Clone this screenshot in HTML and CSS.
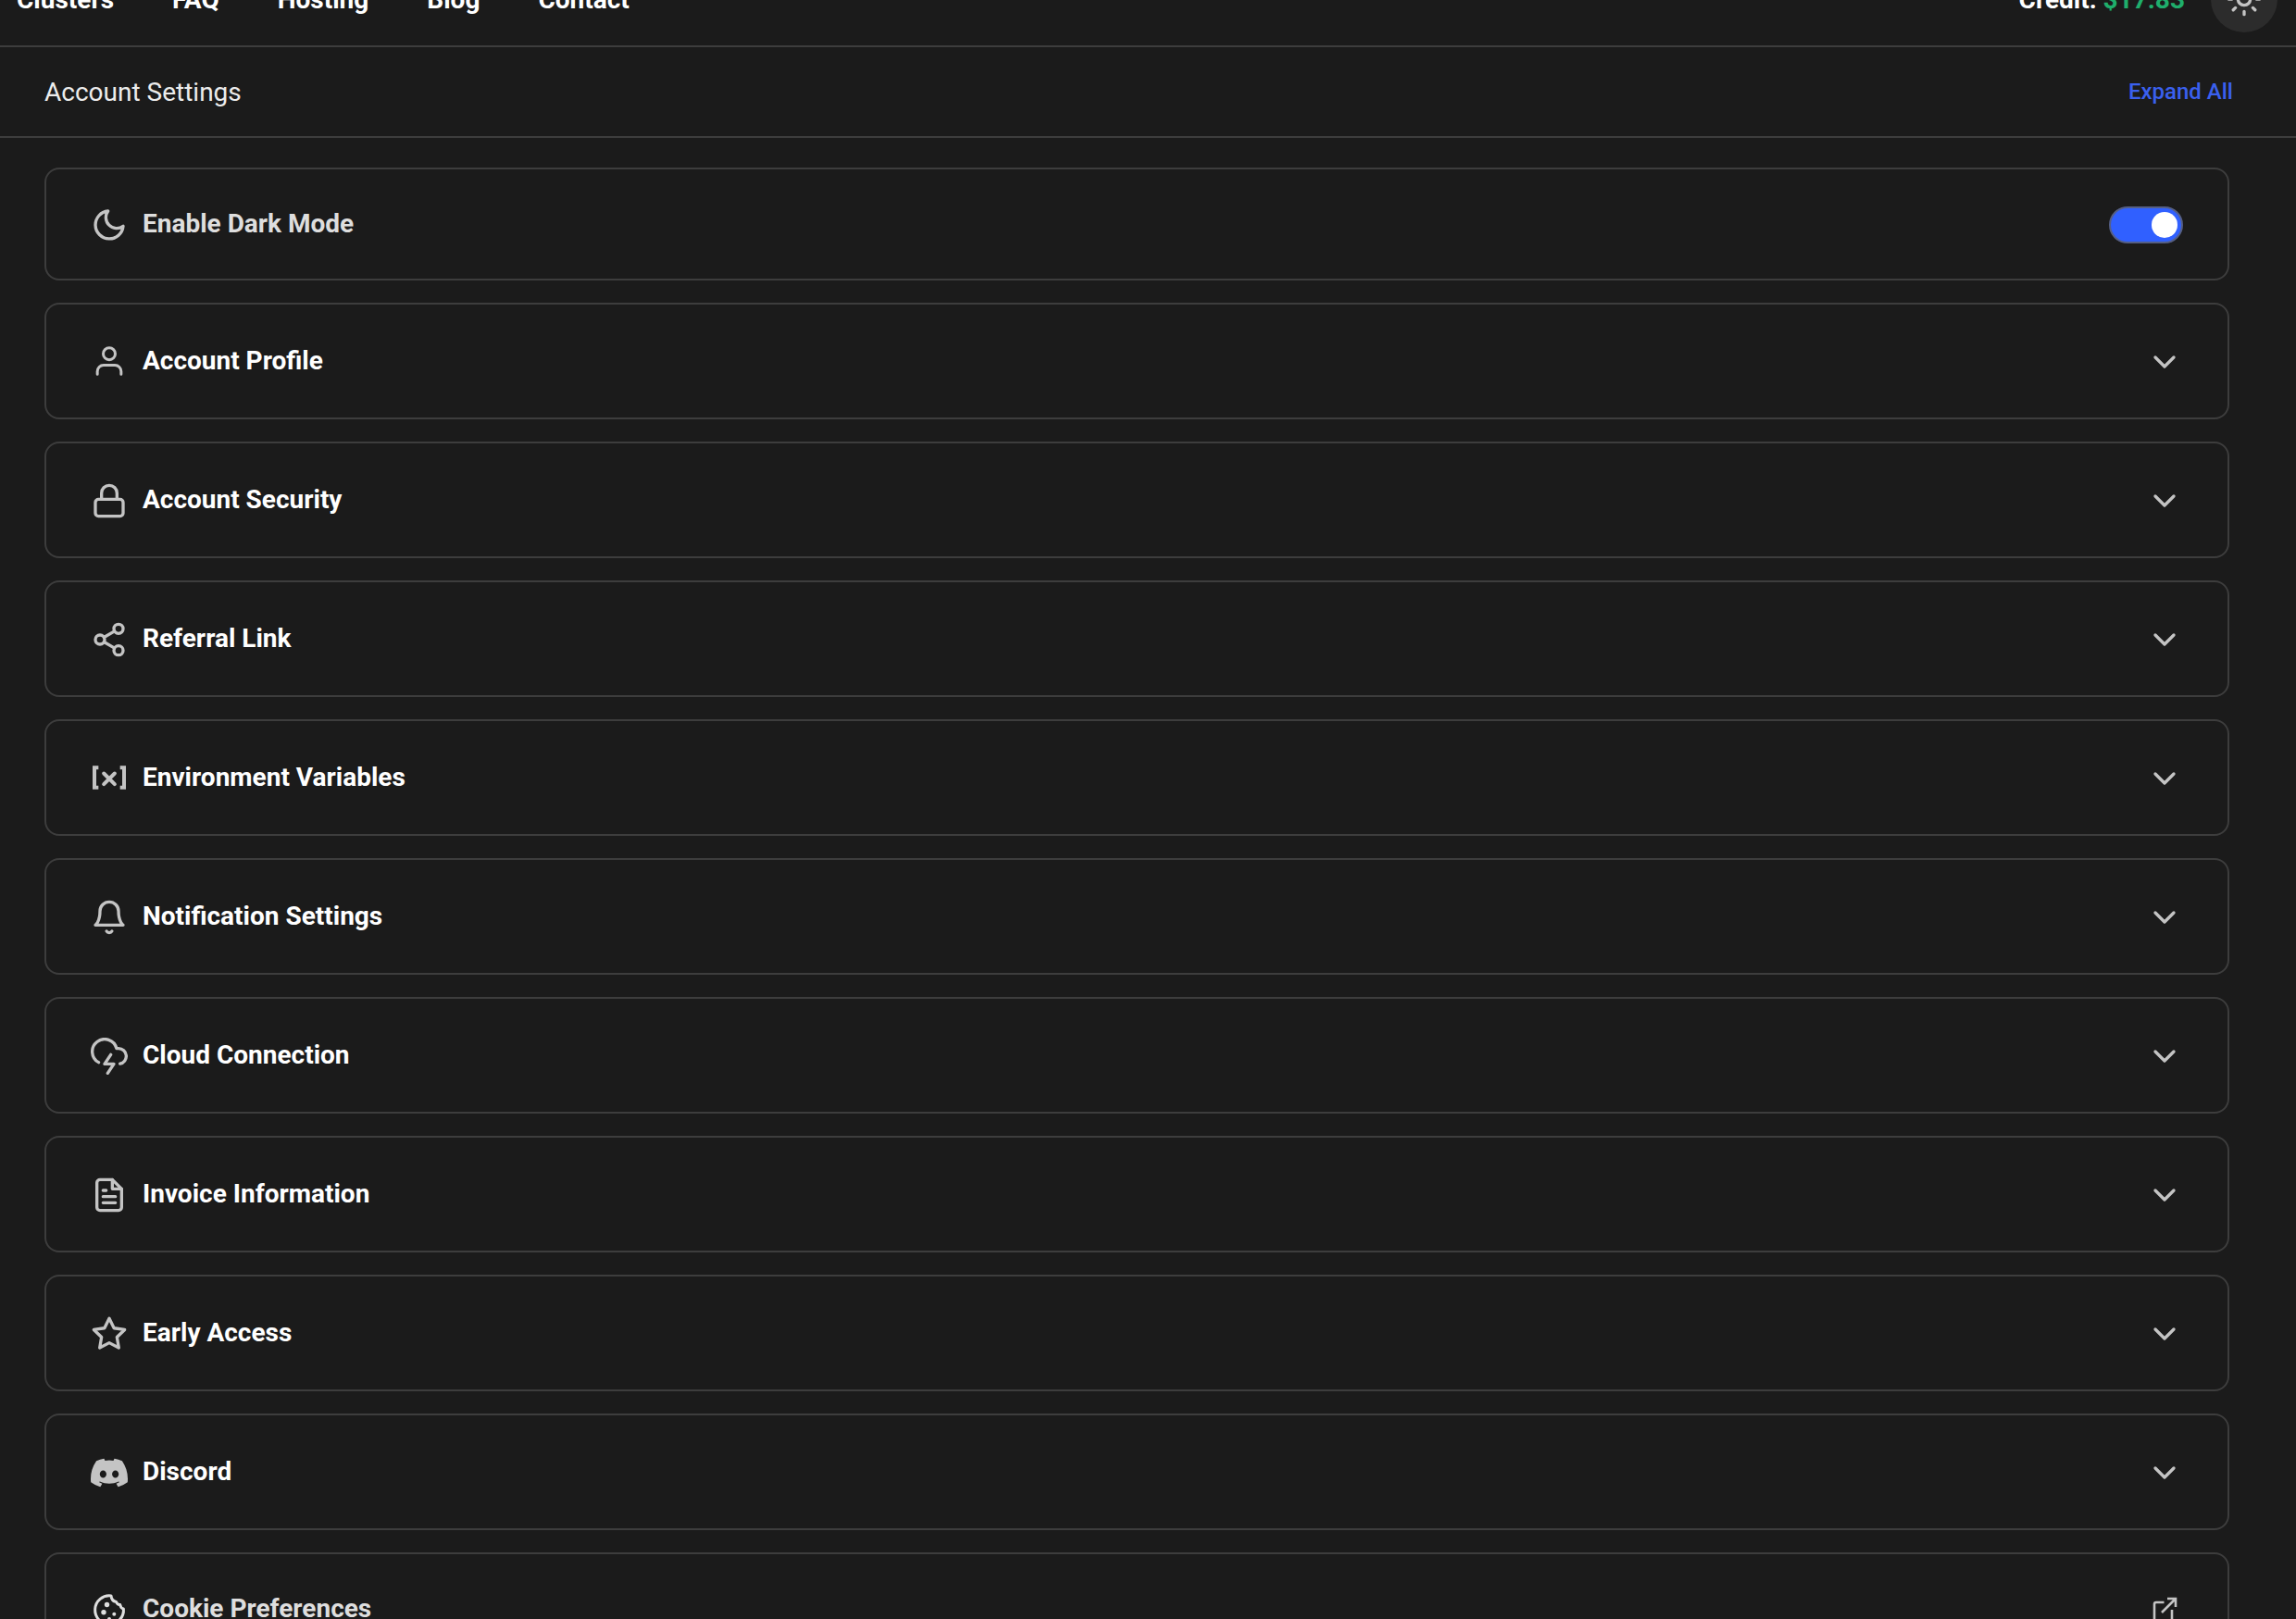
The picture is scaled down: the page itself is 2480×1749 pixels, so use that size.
FILE: index.html
```html
<!DOCTYPE html>
<html lang="en">
<head>
    <meta charset="UTF-8">
    <meta name="viewport" content="width=device-width, initial-scale=1.0">
    <title>Account Settings</title>
    <link rel="stylesheet" href="styles.css">
</head>
<body>
    <header class="topbar">
        <nav class="menu">
            <a href="#clusters">Clusters</a>
            <a href="#faq">FAQ</a>
            <a href="#hosting">Hosting</a>
            <a href="#blog">Blog</a>
            <a href="#contact">Contact</a>
        </nav>
        <div class="account">
            <p class="credit">Credit: <span class="amount">$17.83</span></p>
            <button class="theme-button" type="button" aria-label="Change theme">
                <svg class="icon" viewBox="0 0 24 24"><circle cx="12" cy="12" r="4"/><path d="M12 2v2M12 20v2M4.93 4.93l1.41 1.41M17.66 17.66l1.41 1.41M2 12h2M20 12h2M6.34 17.66l-1.41 1.41M19.07 4.93l-1.41 1.41"/></svg>
            </button>
        </div>
    </header>

    <div class="page-head">
        <h1>Account Settings</h1>
        <button class="expand-all" type="button">Expand All</button>
    </div>

    <main class="settings">
        <label class="card card-plain">
            <svg class="icon" viewBox="0 0 24 24"><path d="M21 12.79A9 9 0 1 1 11.21 3 7 7 0 0 0 21 12.79z"/></svg>
            <span class="card-title">Enable Dark Mode</span>
            <input class="toggle" type="checkbox" checked>
        </label>

        <button class="card" type="button">
            <svg class="icon icon-thin" viewBox="0 0 24 24"><circle cx="12" cy="6.700" r="3.900"/><path d="M19.700 20v-1.900a4 4 0 0 0-4-4H8.300a4 4 0 0 0-4 4V20"/></svg>
            <span class="card-title">Account Profile</span>
            <svg class="icon" viewBox="0 0 24 24"><path d="M6 9l6 6 6-6"/></svg>
        </button>

        <button class="card" type="button">
            <svg class="icon" viewBox="0 0 24 24"><rect x="3" y="11" width="18" height="11" rx="2"/><path d="M7 11V7a5 5 0 0 1 10 0v4"/></svg>
            <span class="card-title">Account Security</span>
            <svg class="icon" viewBox="0 0 24 24"><path d="M6 9l6 6 6-6"/></svg>
        </button>

        <button class="card" type="button">
            <svg class="icon" viewBox="0 0 24 24"><circle cx="18" cy="5" r="3"/><circle cx="6" cy="12" r="3"/><circle cx="18" cy="19" r="3"/><path d="M8.59 13.51l6.83 3.98M15.41 6.51l-6.82 3.98"/></svg>
            <span class="card-title">Referral Link</span>
            <svg class="icon" viewBox="0 0 24 24"><path d="M6 9l6 6 6-6"/></svg>
        </button>

        <button class="card" type="button">
            <svg class="icon icon-square icon-heavy" viewBox="0 0 24 24"><path d="M5 5H2.400v12.900H5M19 5h2.600v12.900H19"/><path class="round" d="M8.500 8.700l7 7M15.500 8.700l-7 7"/></svg>
            <span class="card-title">Environment Variables</span>
            <svg class="icon" viewBox="0 0 24 24"><path d="M6 9l6 6 6-6"/></svg>
        </button>

        <button class="card" type="button">
            <svg class="icon" viewBox="0 0 24 24"><path d="M18 8A6 6 0 0 0 6 8c0 7-3 9-3 9h18s-3-2-3-9"/><path d="M13.73 21a2 2 0 0 1-3.46 0"/></svg>
            <span class="card-title">Notification Settings</span>
            <svg class="icon" viewBox="0 0 24 24"><path d="M6 9l6 6 6-6"/></svg>
        </button>

        <button class="card" type="button">
            <svg class="icon" viewBox="0 0 24 24"><path d="M19 16.9A5 5 0 0 0 18 7h-1.26a8 8 0 1 0-11.62 9"/><path d="M13 11l-4 6h6l-4 6"/></svg>
            <span class="card-title">Cloud Connection</span>
            <svg class="icon" viewBox="0 0 24 24"><path d="M6 9l6 6 6-6"/></svg>
        </button>

        <button class="card" type="button">
            <svg class="icon" viewBox="0 0 24 24"><path d="M14 2H6a2 2 0 0 0-2 2v16a2 2 0 0 0 2 2h12a2 2 0 0 0 2-2V8z"/><path d="M14 2v6h6M16 13H8M16 17H8M10 9H8"/></svg>
            <span class="card-title">Invoice Information</span>
            <svg class="icon" viewBox="0 0 24 24"><path d="M6 9l6 6 6-6"/></svg>
        </button>

        <button class="card" type="button">
            <svg class="icon" viewBox="0 0 24 24"><path d="M12 2l3.09 6.26L22 9.27l-5 4.87 1.18 6.88L12 17.77l-6.18 3.25L7 14.14 2 9.27l6.91-1.01z"/></svg>
            <span class="card-title">Early Access</span>
            <svg class="icon" viewBox="0 0 24 24"><path d="M6 9l6 6 6-6"/></svg>
        </button>

        <button class="card" type="button">
            <svg class="icon icon-fill" viewBox="0 0 24 24"><path d="M20.317 4.37a19.79 19.79 0 0 0-4.885-1.515.074.074 0 0 0-.079.037c-.21.375-.444.864-.608 1.25a18.27 18.27 0 0 0-5.487 0 12.64 12.64 0 0 0-.617-1.25.077.077 0 0 0-.079-.037A19.736 19.736 0 0 0 3.677 4.37a.07.07 0 0 0-.032.027C.533 9.046-.32 13.58.099 18.057a.082.082 0 0 0 .031.057 19.9 19.9 0 0 0 5.993 3.03.078.078 0 0 0 .084-.028 14.09 14.09 0 0 0 1.226-1.994.076.076 0 0 0-.041-.106 13.107 13.107 0 0 1-1.872-.892.077.077 0 0 1-.008-.128 10.2 10.2 0 0 0 .372-.292.074.074 0 0 1 .077-.01c3.928 1.793 8.18 1.793 12.062 0a.074.074 0 0 1 .078.01c.12.098.246.198.373.292a.077.077 0 0 1-.006.127 12.299 12.299 0 0 1-1.873.892.077.077 0 0 0-.041.107c.36.698.772 1.362 1.225 1.993a.076.076 0 0 0 .084.028 19.839 19.839 0 0 0 6.002-3.03.077.077 0 0 0 .032-.054c.5-5.177-.838-9.674-3.549-13.66a.061.061 0 0 0-.031-.03zM8.02 15.33c-1.183 0-2.157-1.085-2.157-2.419 0-1.333.956-2.419 2.157-2.419 1.21 0 2.176 1.096 2.157 2.42 0 1.333-.956 2.418-2.157 2.418zm7.975 0c-1.183 0-2.157-1.085-2.157-2.419 0-1.333.955-2.419 2.157-2.419 1.21 0 2.176 1.096 2.157 2.42 0 1.333-.946 2.418-2.157 2.418z"/></svg>
            <span class="card-title">Discord</span>
            <svg class="icon" viewBox="0 0 24 24"><path d="M6 9l6 6 6-6"/></svg>
        </button>

        <a class="card card-plain" href="#cookies">
            <svg class="icon icon-cookie" viewBox="0 0 40 40"><path d="M22 5A15.400 15.400 0 1 0 35.400 19Q32.500 18.500 31.700 14.500Q29 15 27.500 11.500Q22.500 10.500 22 5z"/><circle class="dot" cx="17.500" cy="14.500" r="2.700"/><circle class="dot" cx="14" cy="22.700" r="2.700"/><circle class="dot" cx="25.300" cy="24.700" r="2"/><circle class="dot" cx="20" cy="30" r="2"/></svg>
            <span class="card-title">Cookie Preferences</span>
            <svg class="icon icon-square icon-link" viewBox="0 0 40 40"><path d="M19.500 12H11a2 2 0 0 0-2 2v18h19V20"/><path d="M23 8h9v9M32 8L17 23"/></svg>
        </a>
    </main>
</body>
</html>
```
FILE: styles.css
```css
* {
    box-sizing: border-box;
}
body {
    margin: 0;
    background: #1b1b1b;
    color: #fff;
    font-family: Roboto, sans-serif;
    font-size: 28px;
    overflow: hidden;
}
a {
    color: inherit;
    text-decoration: none;
}
button {
    font: inherit;
    color: inherit;
    border: none;
    background: none;
    padding: 0;
    cursor: pointer;
}

/* top bar, partly scrolled out of view */
.topbar {
    display: flex;
    justify-content: space-between;
    align-items: center;
    height: 102px;
    margin-top: -51px;
    padding: 0 20px 0 18px;
    border-bottom: 2px solid #3d3d3d;
    font-weight: 700;
}
.menu {
    display: flex;
    gap: 63px;
}
.account {
    display: flex;
    align-items: center;
    gap: 28px;
}
.credit {
    margin: 0;
}
.amount {
    color: #1fae6c;
}
.theme-button {
    display: flex;
    justify-content: center;
    align-items: center;
    width: 72px;
    height: 72px;
    border-radius: 50%;
    background: #2c2c2c;
}

.page-head {
    display: flex;
    justify-content: space-between;
    align-items: center;
    height: 98px;
    padding: 0 68px 0 48px;
    border-bottom: 2px solid #3d3d3d;
}
.page-head h1 {
    margin: 0;
    font-size: 28px;
    font-weight: 400;
    color: #ececec;
}
.expand-all {
    font-size: 24px;
    font-weight: 500;
    color: #3a60ee;
}

.settings {
    display: flex;
    flex-direction: column;
    gap: 24px;
    padding: 32px 72px 32px 48px;
}
.card {
    display: flex;
    align-items: flex-start;
    gap: 16px;
    padding: 42px 48px 40px;
    border: 2px solid #3d3d3d;
    border-radius: 16px;
    text-align: left;
    cursor: pointer;
}
.card-plain {
    padding: 40px 48px 38px;
    color: #dedede;
}
.card-title {
    flex: 1;
    line-height: 38px;
    font-weight: 700;
}

.icon {
    flex: none;
    width: 40px;
    height: 40px;
    fill: none;
    stroke: #c4c4c4;
    stroke-width: 2;
    stroke-linecap: round;
    stroke-linejoin: round;
}
.icon-thin {
    stroke-width: 1.8;
}
.icon-heavy {
    stroke-width: 2.4;
}
.icon-square {
    stroke-linecap: butt;
    stroke-linejoin: miter;
}
.icon-square .round {
    stroke-linecap: round;
}
.icon-fill {
    fill: #c4c4c4;
    stroke: none;
}
.icon-link {
    stroke-width: 2.6;
}
.icon-cookie {
    stroke: #dedede;
    stroke-width: 3;
}
.icon-cookie .dot {
    fill: #dedede;
    stroke: none;
}

.toggle {
    appearance: none;
    flex: none;
    display: flex;
    align-items: center;
    width: 80px;
    height: 40px;
    margin: 0;
    padding: 0 4px;
    border: 2px solid #555f85;
    border-radius: 20px;
    background: #444;
    cursor: pointer;
}
.toggle::before {
    content: "";
    width: 28px;
    height: 28px;
    border-radius: 50%;
    background: #fff;
}
.toggle:checked {
    justify-content: flex-end;
    background: #3060ff;
}
```
